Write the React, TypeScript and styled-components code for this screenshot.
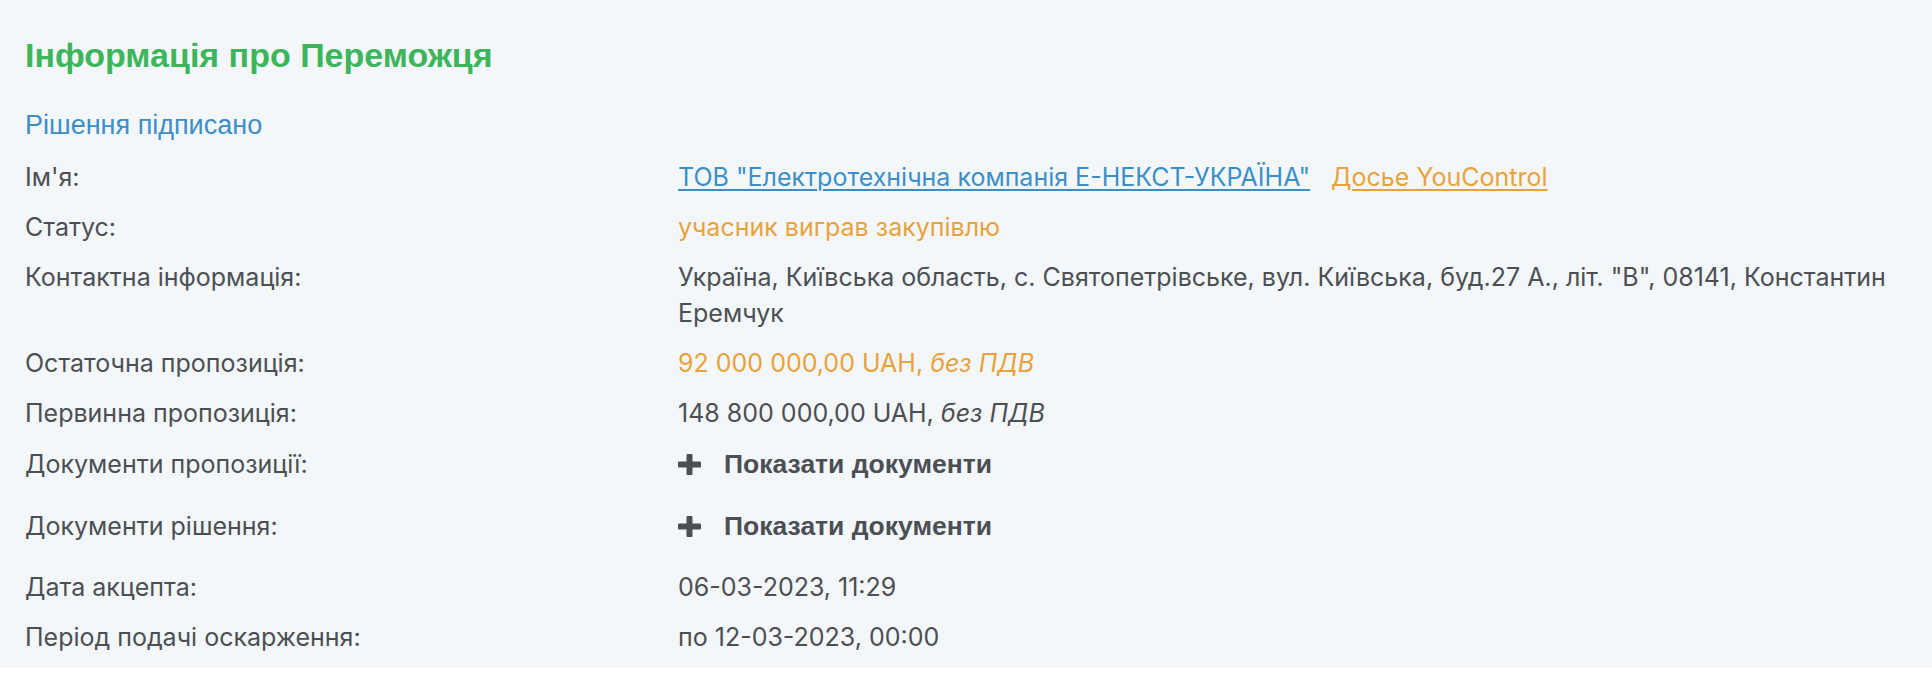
import React from "react";
import styled, { createGlobalStyle } from "styled-components";

const GlobalStyle = createGlobalStyle`
  html, body { margin: 0; padding: 0; background: #ffffff; }
  * { box-sizing: border-box; }
`;

const Section = styled.section`
  background: #f4f7fa;
  padding: 35px 25px 6px;
  font-family: Inter, "Noto Sans", sans-serif;
  color: #4b4f54;
`;

const Title = styled.h2`
  margin: 0;
  font-family: "Liberation Sans", Arial, sans-serif;
  font-weight: 700;
  font-size: 34px;
  line-height: 40px;
  color: #3cb55b;
`;

const Decision = styled.div`
  margin-top: 32px;
  margin-bottom: 9px;
  font-family: "Liberation Sans", Arial, sans-serif;
  font-size: 27px;
  line-height: 36px;
  color: #3d8ec8;
`;

const Row = styled.div<{ $tall?: boolean }>`
  display: grid;
  grid-template-columns: 653px 1fr;
  padding: ${(p) => (p.$tall ? "8px 0 18px" : "7px 0")};
  font-size: 25px;
  line-height: 36px;
`;

const Label = styled.div`
  color: #4b4f54;
`;

const Value = styled.div<{ $tone?: "orange" | "dark" }>`
  color: ${(p) => (p.$tone === "orange" ? "#e9a23b" : "#4b4f54")};
  display: flex;
  flex-wrap: wrap;
  align-items: baseline;
  column-gap: 21px;
`;

const Plain = styled.span``;

const Link = styled.a<{ $tone: "blue" | "orange" }>`
  color: ${(p) => (p.$tone === "blue" ? "#3b8fc9" : "#e9a23b")};
  text-decoration: underline;
  text-decoration-thickness: 2px;
  text-underline-offset: 3px;
  cursor: pointer;
`;

const Vat = styled.i`
  font-style: italic;
`;

const DocsButton = styled.button`
  display: inline-flex;
  align-items: center;
  gap: 23px;
  padding: 0;
  border: 0;
  background: none;
  font-family: "Liberation Sans", Arial, sans-serif;
  font-weight: 700;
  font-size: 26.5px;
  line-height: 36px;
  color: #4b4f54;
  cursor: pointer;
`;

const PlusIcon = () => (
  <svg width="23" height="21" viewBox="0 0 23 21" aria-hidden="true">
    <rect x="0" y="7.5" width="23" height="6" rx="1" fill="#4b4f54" />
    <rect x="8.5" y="0" width="6" height="21" rx="1" fill="#4b4f54" />
  </svg>
);

export default function App() {
  return (
    <>
      <GlobalStyle />
      <Section>
        <Title>Інформація про Переможця</Title>
        <Decision>Рішення підписано</Decision>

        <Row>
          <Label>Ім'я:</Label>
          <Value>
            <Link $tone="blue">ТОВ "Електротехнічна компанія Е-НЕКСТ-УКРАЇНА"</Link>
            <Link $tone="orange">Досье YouControl</Link>
          </Value>
        </Row>
        <Row>
          <Label>Статус:</Label>
          <Value $tone="orange">учасник виграв закупівлю</Value>
        </Row>
        <Row>
          <Label>Контактна інформація:</Label>
          <Value>
            <Plain>
              Україна, Київська область, с. Святопетрівське, вул. Київська, буд.27 А., літ. "В", 08141, Константин Еремчук
            </Plain>
          </Value>
        </Row>
        <Row>
          <Label>Остаточна пропозиція:</Label>
          <Value $tone="orange">
            <Plain>
              92 000 000,00 UAH, <Vat>без ПДВ</Vat>
            </Plain>
          </Value>
        </Row>
        <Row>
          <Label>Первинна пропозиція:</Label>
          <Value>
            <Plain>
              148 800 000,00 UAH, <Vat>без ПДВ</Vat>
            </Plain>
          </Value>
        </Row>
        <Row $tall>
          <Label>Документи пропозиції:</Label>
          <Value>
            <DocsButton>
              <PlusIcon />
              Показати документи
            </DocsButton>
          </Value>
        </Row>
        <Row $tall>
          <Label>Документи рішення:</Label>
          <Value>
            <DocsButton>
              <PlusIcon />
              Показати документи
            </DocsButton>
          </Value>
        </Row>
        <Row>
          <Label>Дата акцепта:</Label>
          <Value>06-03-2023, 11:29</Value>
        </Row>
        <Row>
          <Label>Період подачі оскарження:</Label>
          <Value>по 12-03-2023, 00:00</Value>
        </Row>
      </Section>
    </>
  );
}
